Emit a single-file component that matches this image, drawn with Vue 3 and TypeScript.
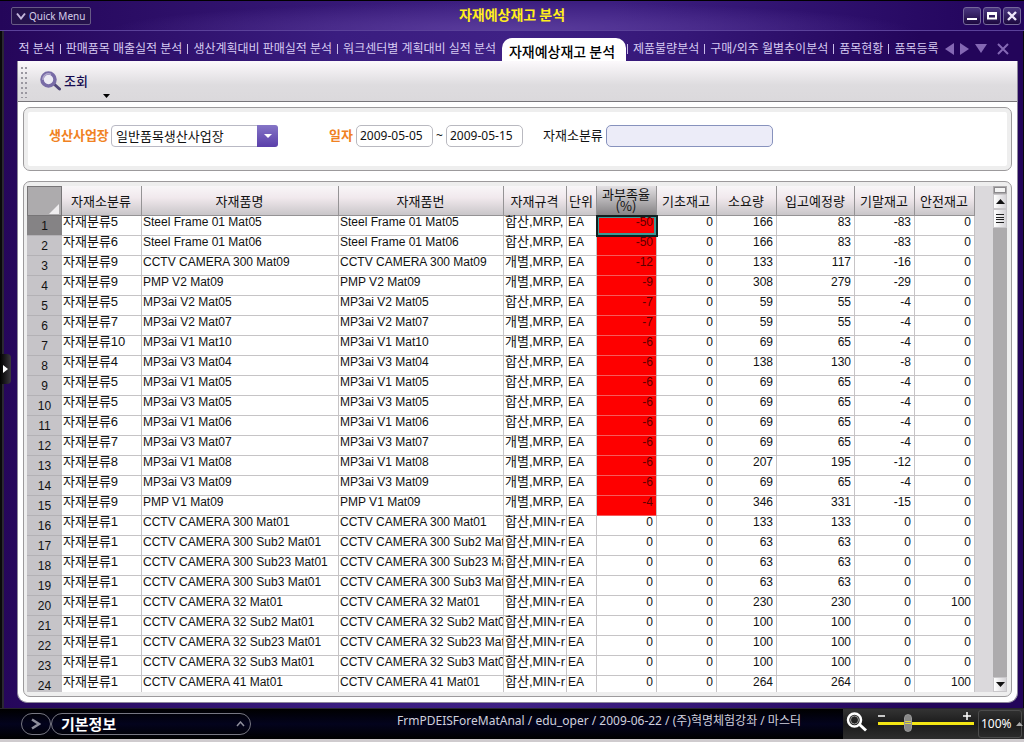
<script setup lang="ts">
import { ref } from 'vue'

interface Row {
  group: string
  name: string
  code: string
  spec: string
  unit: string
  rate: number
  base: number
  need: number
  incoming: number
  ending: number
  safety: number
}

const tabsBefore: string[] = ['적 분석', '판매품목 매출실적 분석', '생산계획대비 판매실적 분석', '워크센터별 계획대비 실적 분석']
const tabsAfter: string[] = ['제품불량분석', '구매/외주 월별추이분석', '품목현황', '품목등록']

const columns: { key: keyof Row; label: string; kind: string }[] = [
  { key: 'group', label: '자재소분류', kind: 'hangul' },
  { key: 'name', label: '자재품명', kind: 'latin' },
  { key: 'code', label: '자재품번', kind: 'latin' },
  { key: 'spec', label: '자재규격', kind: 'hangul' },
  { key: 'unit', label: '단위', kind: 'latin' },
  { key: 'rate', label: '과부족율 (%)', kind: 'num' },
  { key: 'base', label: '기초재고', kind: 'num' },
  { key: 'need', label: '소요량', kind: 'num' },
  { key: 'incoming', label: '입고예정량', kind: 'num' },
  { key: 'ending', label: '기말재고', kind: 'num' },
  { key: 'safety', label: '안전재고', kind: 'num' },
]

type Source = [number, string, string, number, number, number, number, number]
const H = '합산,MRP,'
const G = '개별,MRP,'
const M = '합산,MIN-r'

const source: Source[] = [
  [5, 'Steel Frame 01 Mat05', H, -50, 166, 83, -83, 0],
  [6, 'Steel Frame 01 Mat06', H, -50, 166, 83, -83, 0],
  [9, 'CCTV CAMERA 300 Mat09', G, -12, 133, 117, -16, 0],
  [9, 'PMP V2 Mat09', G, -9, 308, 279, -29, 0],
  [5, 'MP3ai V2 Mat05', H, -7, 59, 55, -4, 0],
  [7, 'MP3ai V2 Mat07', G, -7, 59, 55, -4, 0],
  [10, 'MP3ai V1 Mat10', G, -6, 69, 65, -4, 0],
  [4, 'MP3ai V3 Mat04', H, -6, 138, 130, -8, 0],
  [5, 'MP3ai V1 Mat05', H, -6, 69, 65, -4, 0],
  [5, 'MP3ai V3 Mat05', H, -6, 69, 65, -4, 0],
  [6, 'MP3ai V1 Mat06', H, -6, 69, 65, -4, 0],
  [7, 'MP3ai V3 Mat07', G, -6, 69, 65, -4, 0],
  [8, 'MP3ai V1 Mat08', G, -6, 207, 195, -12, 0],
  [9, 'MP3ai V3 Mat09', G, -6, 69, 65, -4, 0],
  [9, 'PMP V1 Mat09', G, -4, 346, 331, -15, 0],
  [1, 'CCTV CAMERA 300 Mat01', M, 0, 133, 133, 0, 0],
  [1, 'CCTV CAMERA 300 Sub2 Mat01', M, 0, 63, 63, 0, 0],
  [1, 'CCTV CAMERA 300 Sub23 Mat01', M, 0, 63, 63, 0, 0],
  [1, 'CCTV CAMERA 300 Sub3 Mat01', M, 0, 63, 63, 0, 0],
  [1, 'CCTV CAMERA 32 Mat01', M, 0, 230, 230, 0, 100],
  [1, 'CCTV CAMERA 32 Sub2 Mat01', M, 0, 100, 100, 0, 0],
  [1, 'CCTV CAMERA 32 Sub23 Mat01', M, 0, 100, 100, 0, 0],
  [1, 'CCTV CAMERA 32 Sub3 Mat01', M, 0, 100, 100, 0, 0],
  [1, 'CCTV CAMERA 41 Mat01', M, 0, 264, 264, 0, 100],
]

const rows: Row[] = source.map(([g, name, spec, rate, need, incoming, ending, safety]) => ({
  group: `자재분류${g}`, name, code: name, spec, unit: 'EA', rate, base: 0, need, incoming, ending, safety,
}))

const plant = ref('일반품목생산사업장')
const from = ref('2009-05-05')
const to = ref('2009-05-15')
const category = ref('')
const zoom = ref(30)
const selected = ref(0)
</script>

<template>
  <div class="app">
    <header class="titlebar">
      <button class="quick" type="button">
        <svg width="10" height="8" viewBox="0 0 10 8"><path d="M1 1.5 5 6.5 9 1.5" fill="none" stroke="#c3b6dc" stroke-width="2" /></svg>
        Quick Menu
      </button>
      <h1>자재예상재고 분석</h1>
      <div class="window">
        <button type="button" aria-label="최소화"><svg width="12" height="12"><rect x="1" y="8" width="10" height="2" fill="#fff" /></svg></button>
        <button type="button" aria-label="최대화"><svg width="12" height="12"><path d="M2 3.5h8v5H2z" fill="none" stroke="#fff" stroke-width="2" /><path d="M1 3.5h10" stroke="#fff" stroke-width="3" /></svg></button>
        <button type="button" aria-label="닫기"><svg width="12" height="12"><path d="M2 2l8 8M10 2l-8 8" stroke="#eee8fa" stroke-width="2.4" /></svg></button>
      </div>
    </header>

    <nav class="tabs">
      <div class="group before">
        <button v-for="t in tabsBefore" :key="t" type="button" class="tab">{{ t }}</button>
      </div>
      <button type="button" class="active">자재예상재고 분석</button>
      <div class="group after">
        <button v-for="t in tabsAfter" :key="t" type="button" class="tab">{{ t }}</button>
      </div>
      <div class="tabtools">
        <button type="button" aria-label="이전"><svg width="9" height="12"><path d="M9 0v12L0 6z" fill="#8468b4" /></svg></button>
        <button type="button" aria-label="다음"><svg width="9" height="12"><path d="M0 0v12l9-6z" fill="#8468b4" /></svg></button>
        <button type="button" aria-label="목록"><svg width="12" height="9"><path d="M0 0h12L6 9z" fill="#8468b4" /></svg></button>
        <button type="button" class="close" aria-label="탭 닫기"><svg width="12" height="12"><path d="M1 1l10 10M11 1L1 11" stroke="#8468b4" stroke-width="2" /></svg></button>
      </div>
    </nav>

    <main class="page">
      <div class="toolbar">
        <svg class="grip" width="8" height="31">
          <template v-for="n in 7" :key="n">
            <rect x="0" :y="(n - 1) * 5" width="2" height="2" fill="#9a97a0" />
            <rect x="4" :y="(n - 1) * 5" width="2" height="2" fill="#9a97a0" />
          </template>
        </svg>
        <button type="button" class="search">
          <svg width="21" height="20" viewBox="0 0 21 20">
            <path d="M14 13l5.500 5" stroke="#51477a" stroke-width="3" stroke-linecap="round" />
            <circle cx="8.500" cy="8.500" r="6.500" fill="#eceaf4" stroke="#786ba6" stroke-width="3.500" />
            <path d="M3 9a5.500 5.500 0 0 1 8-5.500" fill="none" stroke="#b1a8cc" stroke-width="1.500" />
          </svg>
          조회
        </button>
        <svg class="more" width="7" height="4"><path d="M0 0h7L3.500 4z" fill="#000" /></svg>
      </div>

      <form class="filters" @submit.prevent>
        <label class="req" for="plant">생산사업장</label>
        <div class="combo">
          <select id="plant" v-model="plant"><option>일반품목생산사업장</option></select>
          <span class="drop"><svg width="8" height="4"><path d="M0 0h8L4 4z" fill="#fff" /></svg></span>
        </div>
        <label class="req date" for="from">일자</label>
        <input id="from" v-model="from" class="day" type="text" />
        <span class="tilde">~</span>
        <input v-model="to" class="day" type="text" aria-label="종료일" />
        <label class="opt" for="category">자재소분류</label>
        <input id="category" v-model="category" class="category" type="text" />
      </form>

      <section class="sheet">
        <div class="viewport">
          <table>
            <colgroup>
              <col class="c-no" /><col class="c-group" /><col class="c-name" /><col class="c-code" /><col class="c-spec" /><col class="c-unit" />
              <col class="c-num" /><col class="c-num" /><col class="c-num" /><col class="c-incoming" /><col class="c-num" /><col class="c-num" />
            </colgroup>
            <thead>
              <tr>
                <th class="corner"><svg width="10" height="10"><path d="M10 0v10H0z" fill="#efedef" /></svg></th>
                <th v-for="c in columns" :key="c.key" scope="col" :class="{ hot: c.key === 'rate' }">{{ c.label }}</th>
              </tr>
            </thead>
            <tbody>
              <tr v-for="(r, i) in rows" :key="i" @click="selected = i">
                <th scope="row" :class="{ current: selected === i }">{{ i + 1 }}</th>
                <td
                  v-for="c in columns"
                  :key="c.key"
                  :class="[c.kind, { short: c.key === 'rate' && r.rate < 0, focus: c.key === 'rate' && selected === i }]"
                >
                  <div>{{ r[c.key] }}</div>
                </td>
              </tr>
            </tbody>
          </table>
        </div>
        <div class="scroll">
          <div class="split"></div>
          <button type="button" aria-label="위로"><svg width="9" height="5"><path d="M0 5h9L4.500 0z" fill="#111" /></svg></button>
          <div class="thumb"><svg width="8" height="9"><path d="M0 .5h8M0 3.500h8M0 5.500h8M0 8.500h8" stroke="#222" /></svg></div>
          <div class="track"></div>
          <button type="button" aria-label="아래로"><svg width="9" height="5"><path d="M0 0h9L4.500 5z" fill="#111" /></svg></button>
        </div>
      </section>
    </main>

    <footer class="status">
      <button type="button" class="go" aria-label="열기"><svg width="10" height="12"><path d="M1 1.500l7 4.500-7 4.500" fill="none" stroke="#8f8f9c" stroke-width="2.500" /></svg></button>
      <button type="button" class="info">기본정보<svg width="9" height="6"><path d="M1 5l3.500-4L8 5" fill="none" stroke="#8f8f9c" stroke-width="1.500" /></svg></button>
      <p>FrmPDEISForeMatAnal / edu_oper / 2009-06-22 / (주)혁명체험강좌 / 마스터</p>
      <div class="zoom">
        <svg class="lens" width="22" height="20" viewBox="0 0 22 20"><path d="M13.500 12.500l6.500 6" stroke="#fff" stroke-width="3" /><circle cx="8.500" cy="8" r="6.500" fill="none" stroke="#fff" stroke-width="2.500" /><circle cx="8.500" cy="8" r="4" fill="none" stroke="#999" /></svg>
        <div class="slider">
          <div class="signs">
            <svg width="8" height="8"><path d="M0 4h7" stroke="#fff" stroke-width="1.500" /></svg>
            <svg width="8" height="8"><path d="M0 4h8M4 0v8" stroke="#fff" stroke-width="1.500" /></svg>
          </div>
          <input v-model="zoom" type="range" min="0" max="100" aria-label="확대" />
        </div>
        <button type="button" class="percent">100%<svg width="7" height="4"><path d="M0 4h7L3.500 0z" fill="#aaa" /></svg></button>
      </div>
    </footer>

    <button type="button" class="handle" aria-label="메뉴 펼치기"><svg width="5" height="8"><path d="M0 0v8l5-4z" fill="#fff" /></svg></button>
  </div>
</template>

<style>
body { margin: 0; overflow: hidden; }
</style>

<style scoped>
* { box-sizing: border-box; }
button, input, select { font: inherit; color: inherit; margin: 0; padding: 0; border: 0; background: none; }
svg { display: block; flex: none; }
.app {
  position: relative;
  display: flex;
  flex-direction: column;
  height: 100vh;
  border-bottom: 3px solid #cfcbce;
  font: 12px/16px "Noto Sans", "Noto Sans CJK KR", sans-serif;
  color: #111;
  background: linear-gradient(90deg, #08080a 0 2px, #2b2833 2px 4px, transparent 4px calc(100% - 1px), #08080a 0),
    linear-gradient(90deg, #25065a, #3a1d80 33%, #3f2185 50%, #351777 67%, #23055a 90%);
}
.titlebar {
  position: relative;
  display: flex;
  justify-content: space-between;
  flex: none;
  height: 31px;
  padding: 6px 3px 0 11px;
  border-top: 1px solid #000;
  border-bottom: 1px solid #5b419a;
  background: radial-gradient(ellipse 400px 28px at 50% 100%, #5a3c9c, rgba(74, 42, 142, 0)), linear-gradient(90deg, #24065a, #3c1e80 45%, #3c1e80 60%, #21035a);
}
.quick {
  display: flex;
  align-items: center;
  gap: 3px;
  width: 80px;
  height: 18px;
  padding-left: 4px;
  border: 1px solid #675a86;
  border-radius: 2px;
  background: #25124c;
  color: #d5cdea;
  font-size: 10px;
  white-space: nowrap;
}
h1 {
  position: absolute;
  inset: 4px 0 auto;
  margin: 0;
  font: bold 14px/18px "Noto Sans CJK KR", sans-serif;
  text-align: center;
  color: #ffee1c;
  pointer-events: none;
}
.window { display: flex; gap: 2px; }
.window button {
  display: grid;
  place-items: center;
  width: 18px;
  height: 18px;
  border: 1px solid #75699a;
  border-radius: 3px;
  background: linear-gradient(#4a3680, #1c083f);
}
.tabs { display: flex; align-items: flex-end; flex: none; height: 30px; padding: 0 15px 0 17px; color: #d6caf2; }
.group { display: flex; align-items: center; height: 24px; overflow: hidden; white-space: nowrap; }
.before { justify-content: flex-end; width: 485px; flex: none; padding-right: 6px; }
.after { flex: 1; }
.tab { flex: none; display: flex; align-items: center; }
.before .tab + .tab::before, .after .tab::before { content: ""; width: 1px; height: 10px; margin: 0 5px; background: #cabdea; }
.after .tab:first-child::before { margin-left: 1px; }
.active { flex: none; height: 23px; width: 124px; padding: 2px 4px 0 0; border-radius: 10px 10px 0 0; background: #fff; color: #000; font: 500 14px/18px "Noto Sans CJK KR", sans-serif; }
.tabtools { display: flex; align-items: center; gap: 6px; height: 24px; padding-bottom: 1px; }
.tabtools .close { margin-left: 4px; }
.page {
  display: flex;
  flex-direction: column;
  flex: 1;
  min-height: 0;
  margin: 0 6px 5px 17px;
  padding-bottom: 5px;
  border: 1px solid #8c869a;
  border-top: 0;
  border-radius: 0 0 10px 10px;
  background: #fff;
}
.toolbar {
  display: flex;
  flex: none;
  height: 41px;
  padding: 6px 3px 0;
  border-bottom: 1px solid #77757a;
  background: linear-gradient(#fcf9fc, #dedcdf 60%, #dbd9dc);
}
.search { display: flex; align-items: center; gap: 3px; height: 28px; margin-left: 11px; color: #160c50; font: 500 13px/16px "Noto Sans CJK KR", sans-serif; }
.more { margin: 27px 0 0 15px; }
.filters {
  display: flex;
  align-items: flex-start;
  flex: none;
  height: 64px;
  margin: 5px 5px 10px;
  padding: 13px 25px 0;
  border: 1px solid #9c9a9c;
  border-radius: 7px;
  box-shadow: inset 0 0 0 4px #eeeeee;
}
.filters label { line-height: 20px; font-family: "Noto Sans CJK KR", sans-serif; white-space: nowrap; }
.filters .req { width: 62px; color: #f08223; font-weight: bold; font-size: 13px; }
.filters .date { width: 27px; margin-left: 51px; }
.filters .opt { width: 63px; margin-left: 20px; font-size: 13px; }
.combo { position: relative; width: 167px; height: 22px; margin-top: 4px; }
.filters label, .filters .day, .filters .category, .tilde { margin-top: 4px; }
select { appearance: none; width: 100%; height: 22px; padding: 0 24px 0 4px; border: 1px solid #b9b9c4; border-radius: 4px; background: #fff; font: 13px/20px "Noto Sans CJK KR", sans-serif; }
.drop { position: absolute; inset: 0 0 0 auto; display: grid; place-items: center; width: 21px; border-radius: 0 3px 3px 0; background: linear-gradient(#8575c6, #5a3faa); pointer-events: none; }
.day { width: 77px; height: 22px; padding: 0 3px 2px; border: 1px solid #b9b9c0; border-radius: 5px; }
.tilde { width: 13px; line-height: 21px; text-align: center; }
.category { width: 167px; height: 22px; border: 1px solid #8792bd; border-radius: 5px; background: #ececf8; }
.sheet {
  display: flex;
  flex: 1;
  min-height: 0;
  margin: 0 5px;
  padding: 4px 4px 4px 3px;
  border: 1px solid #9c9a9c;
  border-radius: 7px;
  background: #eeeeee;
}
.viewport { flex: 1; overflow: hidden; background: #dbd9dc; }
table { width: 948px; table-layout: fixed; border-collapse: separate; border-spacing: 0; background: #fff; font-family: "Liberation Sans", "Noto Sans CJK KR", sans-serif; }
.c-no { width: 35px; }
.c-group { width: 80px; }
.c-name { width: 197px; }
.c-code { width: 165px; }
.c-spec { width: 63px; }
.c-unit { width: 30px; }
.c-num { width: 60px; }
.c-incoming { width: 78px; }
th, td { padding: 0; }
thead th {
  height: 30px;
  padding-right: 1px;
  border-right: 1px solid #959395;
  border-bottom: 1px solid #959395;
  background: linear-gradient(#f8f6f8, #f1e9ed 40%, #c9c6c9);
  font: 13px/12px "Noto Sans CJK KR", sans-serif;
}
thead .hot { padding-bottom: 2px; background: linear-gradient(#e3e0e3, #858385); }
thead .corner { border: 1px solid #777577; background: #adabad; vertical-align: bottom; }
.corner svg { margin: 0 1px 1px auto; }
tbody th { height: 20px; padding-top: 1px; border-bottom: 1px solid #b3b1b5; background: #c6c4c8; font-weight: normal; line-height: 18px; }
tbody .current { background: #858385; }
td { height: 20px; border-right: 1px solid #c6c4c6; border-bottom: 1px solid #c6c4c6; vertical-align: top; }
td div { height: 20px; margin-top: -4px; padding: 0 1px; overflow: hidden; white-space: nowrap; line-height: 20px; }
.hangul div { font-size: 13px; }
.num div { padding-right: 3px; text-align: right; }
.short { background: #fe0000; border-bottom-color: #f45c5c; color: #5d0000; }
.focus { outline: 2px solid #102020; outline-offset: -1px; box-shadow: inset 0 0 0 2px #3c9a96; }
.scroll { display: flex; flex-direction: column; width: 14px; background: #adabad; }
.split { height: 6px; margin: 1px; border: 1px solid #8b898c; background: #f4f4f4; }
.scroll button, .thumb { display: grid; place-items: center; height: 15px; border: 1px solid #c9c7ca; background: linear-gradient(90deg, #fff, #d5d3d7); }
.thumb { height: 19px; }
.track { flex: 1; }
.status {
  display: flex;
  align-items: center;
  flex: none;
  height: 31px;
  padding-left: 21px;
  border-top: 1px solid #28262c;
  background: linear-gradient(#000, #03031d 50%, #000);
  color: #d0d0dc;
}
.go { display: grid; place-items: center; width: 30px; height: 22px; border: 1px solid #777782; border-radius: 11px; }
.info {
  display: flex;
  align-items: center;
  justify-content: space-between;
  width: 200px;
  height: 22px;
  padding: 0 5px 0 9px;
  border: 1px solid #777782;
  border-radius: 11px;
  color: #fff;
  font: bold 15px/18px "Noto Sans CJK KR", sans-serif;
}
.status p { flex: 1; margin: 0; padding: 0 42px 6px 0; text-align: right; white-space: nowrap; }
.zoom { display: flex; align-items: center; height: 30px; padding: 0 2px 0 3px; background: linear-gradient(#333, #1b1b1b 50%, #2d2d2d); color: #fff; }
.lens { margin: 0 10px 4px 0; }
.slider { width: 96px; margin-right: 4px; padding-bottom: 4px; }
.signs { display: flex; justify-content: space-between; padding-right: 3px; }
.slider input { appearance: none; display: block; width: 100%; height: 18px; margin-top: -6px; }
.slider input::-webkit-slider-runnable-track { height: 3px; background: #f4e614; }
.slider input::-webkit-slider-thumb { appearance: none; width: 8px; height: 18px; margin-top: -8px; border: 1px solid #999; border-radius: 4px; background: linear-gradient(#888 6px, #e5dc38 6px 7px, #888 7px 8px, #e5dc38 8px 9px, #888 9px); }
.percent { display: flex; align-items: center; gap: 4px; height: 28px; width: 44px; padding-left: 2px; border: 1px solid #4b4b4b; border-radius: 3px; }
.handle { position: absolute; left: 0; top: 354px; display: grid; place-items: center; width: 11px; height: 30px; border-radius: 0 4px 4px 0; background: linear-gradient(90deg, #000, #3b383d); }
</style>
